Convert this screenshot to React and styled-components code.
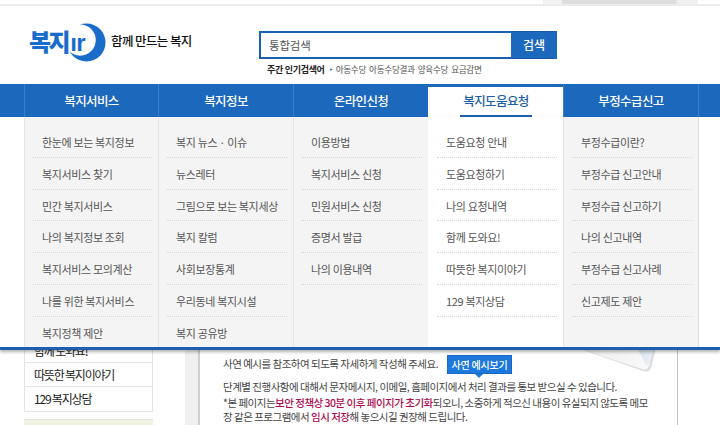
import React from 'react';
import styled, { createGlobalStyle } from 'styled-components';

const GlobalStyle = createGlobalStyle`
  html, body {
    margin: 0;
    padding: 0;
    background: #fff;
    font-family: "Noto Sans CJK KR", "Noto Sans", sans-serif;
  }
  * { box-sizing: border-box; }
`;

const menus = [
  { title: '복지서비스', items: ['한눈에 보는 복지정보', '복지서비스 찾기', '민간 복지서비스', '나의 복지정보 조회', '복지서비스 모의계산', '나를 위한 복지서비스', '복지정책 제안'] },
  { title: '복지정보', items: ['복지 뉴스 · 이슈', '뉴스레터', '그림으로 보는 복지세상', '복지 칼럼', '사회보장통계', '우리동네 복지시설', '복지 공유방'] },
  { title: '온라인신청', items: ['이용방법', '복지서비스 신청', '민원서비스 신청', '증명서 발급', '나의 이용내역'] },
  { title: '복지도움요청', active: true, items: ['도움요청 안내', '도움요청하기', '나의 요청내역', '함께 도와요!', '따뜻한 복지이야기', '129 복지상담'] },
  { title: '부정수급신고', items: ['부정수급이란?', '부정수급 신고안내', '부정수급 신고하기', '나의 신고내역', '부정수급 신고사례', '신고제도 제안'] },
];

const keywords = ['아동수당', '아동수당결과', '양육수당', '요금감면'];

export default function App() {
  return (
    <Page>
      <GlobalStyle />
      <TopStrip>
        <TopTab />
      </TopStrip>
      <Header>
        <Logo>
          <LogoRing viewBox="0 0 40 42" aria-hidden="true">
            <circle cx="20" cy="21" r="19.5" fill="#1a6ccb" />
            <circle cx="13.5" cy="18.5" r="16" fill="#fff" />
          </LogoRing>
          <LogoText>복지<LogoLatin>ır</LogoLatin></LogoText>
        </Logo>
        <Tagline>함께 만드는 복지</Tagline>
        <SearchArea>
          <SearchRow>
            <SearchInput>통합검색</SearchInput>
            <SearchButton>검색</SearchButton>
          </SearchRow>
          <Popular>
            <PopularTitle>주간 인기검색어</PopularTitle>
            <PopularMark>‣</PopularMark>
            {keywords.map((word) => <Keyword key={word}>{word}</Keyword>)}
          </Popular>
        </SearchArea>
      </Header>
      <Nav>
        <NavGrid>
          {menus.map((menu) => (
            <NavItem key={menu.title} $active={menu.active}>
              <NavLabel $active={menu.active}>{menu.title}</NavLabel>
            </NavItem>
          ))}
        </NavGrid>
        <Dropdown>
          <DropGrid>
            {menus.map((menu) => (
              <DropColumn key={menu.title} $active={menu.active}>
                {menu.items.map((item) => <DropItem key={item}>{item}</DropItem>)}
              </DropColumn>
            ))}
          </DropGrid>
        </Dropdown>
      </Nav>
      <Main>
        <Sidebar>
          <SideList>
            <SideRow>함께 도와요!</SideRow>
            <SideRow>따뜻한 복지이야기</SideRow>
            <SideRow>129 복지상담</SideRow>
          </SideList>
          <GreenBox />
        </Sidebar>
        <SideGap />
        <Content>
          <PaperFold viewBox="0 0 80 26" aria-hidden="true">
            <defs>
              <linearGradient id="fold" x1="0" y1="0" x2="1" y2="1">
                <stop offset="0" stopColor="#d4e0ec" />
                <stop offset="1" stopColor="#f2f4f7" />
              </linearGradient>
              <linearGradient id="sheet" x1="0" y1="0" x2="1" y2="0">
                <stop offset="0" stopColor="#ececec" />
                <stop offset="1" stopColor="#fafafa" />
              </linearGradient>
            </defs>
            <path d="M0 0 L66 23 Q72 25 74 20 L79 0 Z" fill="#dcdcdc" />
            <path d="M0 0 L65 21 Q70 23 72 18 L76 0 Z" fill="url(#sheet)" />
            <path d="M60 0 L70 19 Q71 18 72 15 L76 0 Z" fill="url(#fold)" />
          </PaperFold>
          <ExampleLine>
            사연 예시를 참조하여 되도록 자세하게 작성해 주세요.
            <ExampleButton>사연 예시보기</ExampleButton>
          </ExampleLine>
          <Paragraph>단계별 진행사항에 대해서 문자메시지, 이메일, 홈페이지에서 처리 결과를 통보 받으실 수 있습니다.</Paragraph>
          <Notice>
            *본 페이지는<Strong>보안 정책상 30분 이후 페이지가 초기화</Strong>되오니, 소중하게 적으신 내용이 유실되지 않도록 메모<br />
            장 같은 프로그램에서 <Strong>임시 저장</Strong>해 놓으시길 권장해 드립니다.
          </Notice>
        </Content>
      </Main>
    </Page>
  );
}

const Page = styled.div`
  width: 720px;
  height: 425px;
  overflow: hidden;
  background: #fff;
`;

const TopStrip = styled.div`
  height: 6px;
  border-bottom: 2px solid #ececec;
  display: flex;
  justify-content: flex-end;
  padding-right: 22px;
`;

const TopTab = styled.div`
  width: 155px;
  height: 4px;
  background: linear-gradient(90deg, #f2f2f2 0, #f2f2f2 18px, #dedede 20px, #dedede 132px, #f0f0f0 135px);
`;

const Header = styled.header`
  height: 78px;
  display: flex;
  position: relative;
  padding-left: 30px;
`;

const Logo = styled.div`
  width: 76px;
  height: 42px;
  margin-top: 16px;
  position: relative;
  flex: none;
`;

const LogoRing = styled.svg`
  position: absolute;
  left: 37px;
  top: 0;
  width: 39px;
  height: 41px;
`;

const LogoText = styled.div`
  position: absolute;
  left: -1px;
  top: 4px;
  font-size: 24px;
  line-height: 30px;
  font-weight: 900;
  letter-spacing: -2.5px;
  color: #1a6ccb;
  white-space: nowrap;
`;

const LogoLatin = styled.span`
  margin-left: 2px;
  font-family: "Liberation Sans", sans-serif;
  font-size: 24px;
  font-weight: 700;
  letter-spacing: -0.5px;
`;

const Tagline = styled.div`
  margin: 25px 0 0 5px;
  width: 148px;
  flex: none;
  font-size: 12.5px;
  line-height: 20px;
  font-weight: 500;
  letter-spacing: -0.6px;
  color: #111;
  white-space: nowrap;
`;

const SearchArea = styled.div`
  margin-top: 25px;
  display: flex;
  flex-direction: column;
`;

const SearchRow = styled.div`
  display: flex;
  height: 28px;
`;

const SearchInput = styled.div`
  width: 252px;
  border: 2px solid #1a5fb0;
  border-right: 0;
  padding-left: 8px;
  font-size: 11.5px;
  line-height: 24px;
  letter-spacing: -0.2px;
  color: #555;
`;

const SearchButton = styled.div`
  width: 46px;
  background: #1c68bd;
  border-top: 1px solid #1a5aa6;
  border-bottom: 1px solid #1a5aa6;
  color: #fff;
  font-size: 12px;
  font-weight: 500;
  line-height: 26px;
  text-align: center;
`;

const Popular = styled.div`
  display: flex;
  align-items: center;
  height: 14px;
  margin-top: 3px;
  padding-left: 8px;
  font-size: 9px;
  letter-spacing: -0.3px;
  white-space: nowrap;
`;

const PopularTitle = styled.span`
  color: #222;
  font-weight: 700;
`;

const PopularMark = styled.span`
  margin: 0 3px 0 5px;
  color: #1c68bd;
`;

const Keyword = styled.span`
  margin-right: 3px;
  font-size: 8.6px;
  color: #555;
`;

const Nav = styled.nav`
  position: relative;
  z-index: 2;
  height: 33px;
  background: #1c68bd;
  padding-left: 24px;
`;

const NavGrid = styled.div`
  display: grid;
  grid-template-columns: 134px repeat(4, 135px);
  width: 675px;
  height: 33px;
  border-right: 1px solid #3d7fca;
`;

const NavItem = styled.div`
  display: flex;
  justify-content: center;
  margin-top: ${({ $active }) => ($active ? '3px' : '0')};
  background: ${({ $active }) => ($active ? '#fff' : 'transparent')};
  border-left: 1px solid ${({ $active }) => ($active ? '#fff' : '#3d7fca')};
`;

const NavLabel = styled.div`
  height: ${({ $active }) => ($active ? '30px' : '33px')};
  padding: 0 3px;
  font-size: 12.5px;
  line-height: ${({ $active }) => ($active ? '27px' : '33px')};
  font-weight: 500;
  letter-spacing: -0.6px;
  color: ${({ $active }) => ($active ? '#1c5fa8' : '#fff')};
  border-bottom: ${({ $active }) => ($active ? '2px solid #1a5fb0' : '0')};
`;

const Dropdown = styled.div`
  position: absolute;
  left: 0;
  top: 33px;
  width: 720px;
  height: 233px;
  background: #fff;
  padding-left: 24px;
  border-bottom: 3px solid #1a5fb0;
  box-shadow: 0 2px 3px rgba(0, 0, 0, 0.3);
  overflow: hidden;
`;

const DropGrid = styled.div`
  display: grid;
  grid-template-columns: 134px repeat(4, 135px);
  width: 675px;
  height: 230px;
  border-right: 1px solid #ddd;
`;

const DropColumn = styled.div`
  padding: 9px 6px 0 8px;
  background: ${({ $active }) => ($active ? '#fff' : '#f4f4f4')};
  border-left: 1px solid ${({ $active }) => ($active ? '#fff' : '#e4e4e4')};
`;

const DropItem = styled.div`
  height: 31.8px;
  padding-left: 9px;
  border-bottom: 1px dotted #d6d6d6;
  font-size: 11px;
  line-height: 33px;
  letter-spacing: -0.35px;
  color: #555;
  white-space: nowrap;
`;

const Main = styled.main`
  display: flex;
  height: 308px;
  padding-left: 24px;
`;

const Sidebar = styled.aside`
  width: 129px;
  flex: none;
  padding-top: 221px;
`;

const SideList = styled.div`
  border: 1px solid #e4e4e4;
`;

const SideRow = styled.div`
  height: 24px;
  padding-left: 9px;
  border-bottom: 1px solid #e4e4e4;
  font-size: 12px;
  line-height: 23px;
  letter-spacing: -1.2px;
  color: #222;
  &:last-child { border-bottom: 0; }
`;

const GreenBox = styled.div`
  height: 40px;
  margin-top: 7px;
  background: #eef2e0;
  border-top: 1px solid #e4e4e4;
`;

const SideGap = styled.div`
  width: 47px;
  flex: none;
  margin-left: 0;
  background: linear-gradient(90deg, #fff 0, #fff 32px, #f0f0f0 32px, #f0f0f0 45px, #cfcfcf 45px);
`;

const Content = styled.section`
  position: relative;
  width: 478px;
  flex: none;
  padding: 237px 0 0 23px;
  border-right: 1px solid #c4c4c4;
  font-size: 10.5px;
  line-height: 14.5px;
  letter-spacing: -0.5px;
  color: #444;
  white-space: nowrap;
`;

const PaperFold = styled.svg`
  position: absolute;
  left: 377px;
  top: 231px;
  width: 80px;
  height: 26px;
`;

const ExampleLine = styled.div`
  position: relative;
  display: flex;
  align-items: center;
  height: 20px;
`;

const ExampleButton = styled.span`
  position: relative;
  margin-left: 9px;
  width: 65px;
  height: 19px;
  background: #1c78dc;
  border: 1px solid #1a68c0;
  color: #fff;
  font-size: 10px;
  font-weight: 500;
  line-height: 17px;
  letter-spacing: -0.2px;
  text-align: center;
  &::after {
    content: '';
    position: absolute;
    left: 27px;
    top: 18px;
    border: 4px solid transparent;
    border-top-color: #1c78dc;
    border-bottom: 0;
  }
`;

const Paragraph = styled.p`
  margin: 6px 0 0;
`;

const Notice = styled.p`
  margin: 1px 0 0;
`;

const Strong = styled.strong`
  color: #b00a4f;
  font-weight: 500;
`;
